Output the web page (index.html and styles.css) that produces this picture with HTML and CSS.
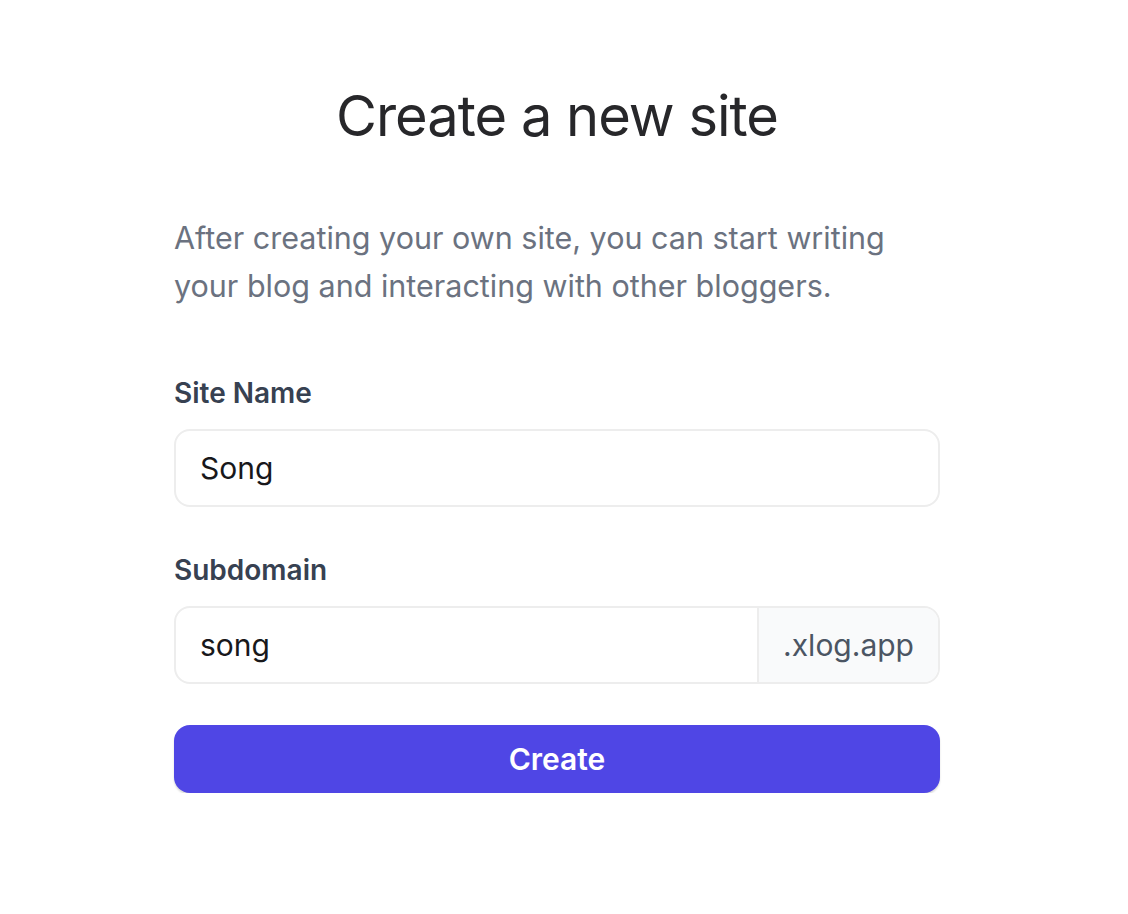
FILE: index.html
```html
<!DOCTYPE html>
<html lang="en">
<head>
  <meta charset="UTF-8">
  <meta name="viewport" content="width=device-width, initial-scale=1.0">
  <title>Create a new site</title>
  <link rel="stylesheet" href="styles.css">
</head>
<body>
  <div class="modal">
    <h1 class="title">Create a new site</h1>

    <p class="intro">After creating your own site, you can start writing your blog and interacting with other bloggers.</p>

    <form class="form">
      <div class="field">
        <label class="label" for="site-name">Site Name</label>
        <div class="input-group">
          <input class="input" id="site-name" type="text" value="Song">
        </div>
      </div>

      <div class="field">
        <label class="label" for="subdomain">Subdomain</label>
        <div class="input-group">
          <input class="input" id="subdomain" type="text" value="song">
          <span class="addon">.xlog.app</span>
        </div>
      </div>

      <button class="button" type="button">Create</button>
    </form>
  </div>
</body>
</html>
```

FILE: styles.css
```css
* {
  box-sizing: border-box;
}
body {
  margin: 0;
  font-family: Inter, "Noto Sans", sans-serif;
  color: #1f2937;
  background: #fff;
}
.modal {
  width: 766px;
  margin-left: 174px;
  padding-top: 80px;
}
.title {
  margin: 0;
  text-align: center;
  font-size: 56px;
  line-height: 72px;
  font-weight: 400;
  letter-spacing: -1px;
  color: #27272a;
}
.intro {
  margin: 62px 0 0;
  font-size: 30.5px;
  line-height: 48px;
  color: #6b7280;
}
.form {
  margin-top: 63px;
  display: flex;
  flex-direction: column;
}
.field {
  margin-bottom: 43px;
}
.field:last-of-type {
  margin-bottom: 41px;
}
.label {
  display: block;
  font-size: 28px;
  line-height: 40px;
  font-weight: 600;
  color: #374151;
  margin-bottom: 16px;
}
.input-group {
  display: flex;
  height: 78px;
  border: 2px solid #ededed;
  border-radius: 16px;
  overflow: hidden;
}
.input {
  flex: 1;
  min-width: 0;
  border: 0;
  outline: 0;
  padding: 0 24px;
  font: inherit;
  font-size: 30px;
  color: #18181b;
  background: transparent;
}
.addon {
  display: flex;
  align-items: center;
  padding: 0 24px;
  background: #f9fafb;
  border-left: 2px solid #ededed;
  font-size: 30px;
  color: #4b5563;
}
.button {
  height: 68px;
  border: 0;
  border-radius: 16px;
  background: #4f46e5;
  box-shadow: 0 2px 2px rgba(0, 0, 0, 0.15);
  color: #fff;
  font: inherit;
  font-size: 30px;
  font-weight: 600;
  cursor: pointer;
}
```
